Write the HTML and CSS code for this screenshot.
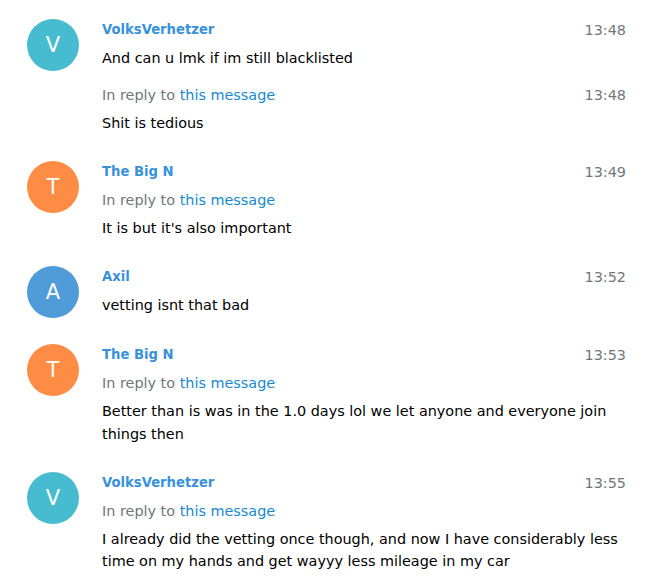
FILE: index.html
```html
<!DOCTYPE html>
<html lang="en">
<head>
    <meta charset="UTF-8">
    <title>Chat history</title>
    <link rel="stylesheet" href="styles.css">
</head>
<body>
    <div class="history">

        <div class="message">
            <div class="userpic userpic7">V</div>
            <div class="body">
                <div class="entry">
                    <div class="head">
                        <span class="from_name">VolksVerhetzer</span>
                        <span class="date">13:48</span>
                    </div>
                    <div class="text">And can u lmk if im still blacklisted</div>
                </div>
                <div class="entry">
                    <div class="head">
                        <span class="reply_to">In reply to <a href="#">this message</a></span>
                        <span class="date">13:48</span>
                    </div>
                    <div class="text">Shit is tedious</div>
                </div>
            </div>
        </div>

        <div class="message">
            <div class="userpic userpic8">T</div>
            <div class="body">
                <div class="entry">
                    <div class="head">
                        <span class="from_name">The Big N</span>
                        <span class="date">13:49</span>
                    </div>
                    <div class="reply_to">In reply to <a href="#">this message</a></div>
                    <div class="text">It is but it's also important</div>
                </div>
            </div>
        </div>

        <div class="message">
            <div class="userpic userpic4">A</div>
            <div class="body">
                <div class="entry">
                    <div class="head">
                        <span class="from_name">Axil</span>
                        <span class="date">13:52</span>
                    </div>
                    <div class="text">vetting isnt that bad</div>
                </div>
            </div>
        </div>

        <div class="message">
            <div class="userpic userpic8">T</div>
            <div class="body">
                <div class="entry">
                    <div class="head">
                        <span class="from_name">The Big N</span>
                        <span class="date">13:53</span>
                    </div>
                    <div class="reply_to">In reply to <a href="#">this message</a></div>
                    <div class="text">Better than is was in the 1.0 days lol we let anyone and everyone join things then</div>
                </div>
            </div>
        </div>

        <div class="message">
            <div class="userpic userpic7">V</div>
            <div class="body">
                <div class="entry">
                    <div class="head">
                        <span class="from_name">VolksVerhetzer</span>
                        <span class="date">13:55</span>
                    </div>
                    <div class="reply_to">In reply to <a href="#">this message</a></div>
                    <div class="text">I already did the vetting once though, and now I have considerably less time on my hands and get wayyy less mileage in my car</div>
                </div>
            </div>
        </div>

    </div>
</body>
</html>
```

FILE: styles.css
```css
* {
    box-sizing: border-box;
}

body {
    margin: 0;
    padding: 0;
    background: #ffffff;
    font-family: "DejaVu Sans", Verdana, sans-serif;
    font-size: 14.4px;
    color: #000000;
}

.history {
    padding-top: 6px;
}

.message {
    display: flex;
    gap: 23px;
    padding: 13px 39px 13.5px 27px;
}

.userpic {
    flex: none;
    width: 52px;
    height: 52px;
    border-radius: 50%;
    color: #ffffff;
    font-size: 21px;
    line-height: 52px;
    text-align: center;
}

.userpic4 { background-color: #4f9cd9; }
.userpic7 { background-color: #47bcd1; }
.userpic8 { background-color: #ff8c44; }

.body {
    flex: 1;
    display: flex;
    flex-direction: column;
    gap: 14px;
}

.head {
    display: flex;
    justify-content: space-between;
    align-items: center;
    height: 22px;
}

.head, .reply_to {
    line-height: 22px;
    margin-bottom: 6px;
}

.head .reply_to {
    margin-bottom: 0;
}

.from_name {
    font-weight: bold;
    font-size: 13.2px;
    color: #3892db;
}

.date {
    color: #70777b;
}

.reply_to {
    color: #70777b;
}

.reply_to a {
    color: #168acd;
    text-decoration: none;
}

.text {
    line-height: 22.5px;
}
```
